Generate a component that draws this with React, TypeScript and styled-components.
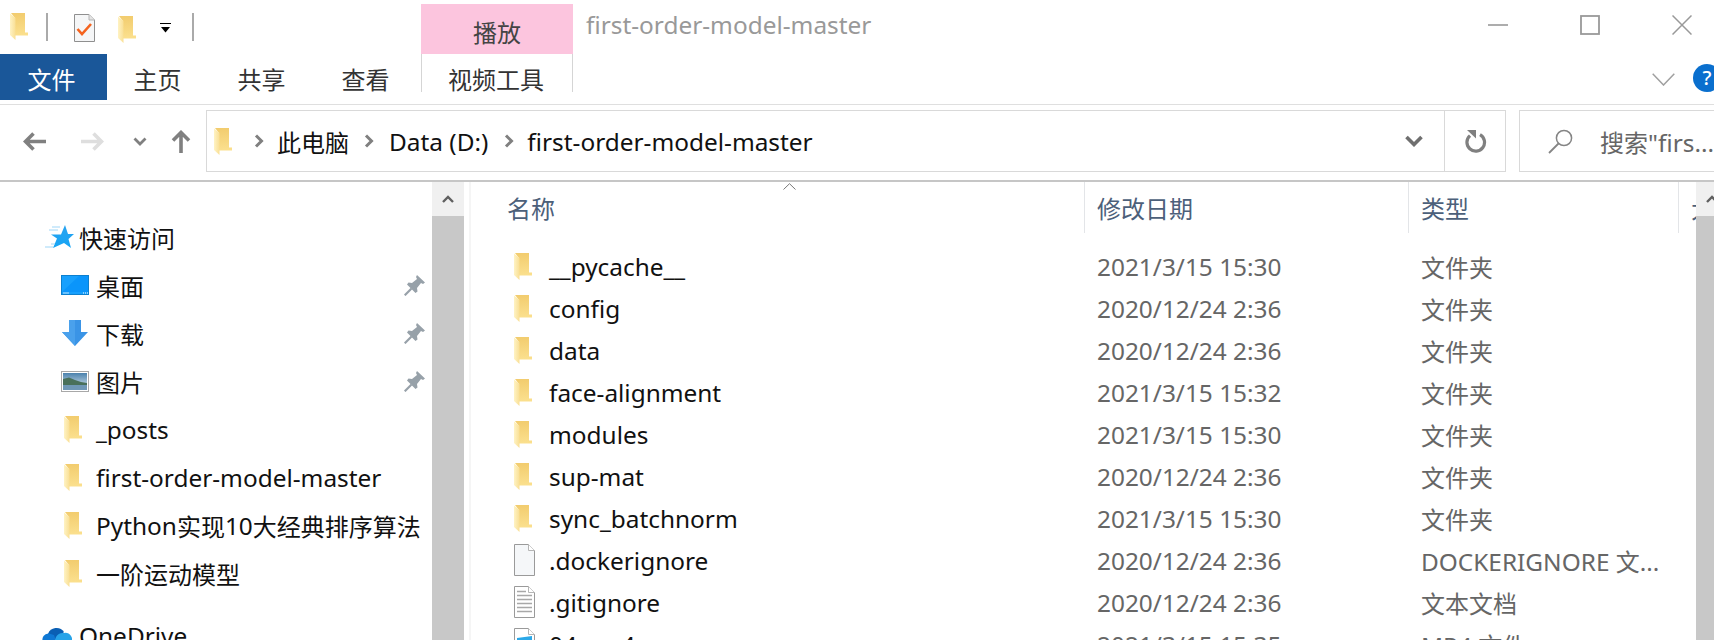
import React from 'react';
import styled, { createGlobalStyle } from 'styled-components';

const Global = createGlobalStyle`
  html, body { margin: 0; padding: 0; background: #fff; }
  body { font-family: "Noto Sans", "Noto Sans CJK SC", sans-serif; font-size: 24px; color: #000; }
`;

const Page = styled.div`
  width: 1714px;
  height: 640px;
  overflow: hidden;
  background: #fff;
  display: flex;
  flex-direction: column;
`;

const Latin = styled.span`
  font-size: 24.4px;
`;

/* title bar */
const TitleBar = styled.div`
  height: 54px;
  display: flex;
  flex-shrink: 0;
`;
const Qat = styled.div`
  width: 421px;
  flex-shrink: 0;
  display: flex;
  align-items: flex-start;
`;
const QatItem = styled.span<{ $left: number; $top: number }>`
  display: flex;
  margin-left: ${p => p.$left}px;
  margin-top: ${p => p.$top}px;
`;
const QatSep = styled.span<{ $left: number }>`
  width: 2px;
  height: 28px;
  margin-top: 13px;
  margin-left: ${p => p.$left}px;
  background: #aaa;
`;
const ContextTab = styled.div`
  width: 152px;
  height: 50px;
  margin-top: 4px;
  flex-shrink: 0;
  background: #fcc5de;
  color: #444;
  display: flex;
  align-items: center;
  justify-content: center;
  padding-top: 5px;
  box-sizing: border-box;
`;
const WinTitle = styled.div`
  flex: 1;
  padding-left: 13px;
  color: #999;
  line-height: 50px;
  white-space: nowrap;
`;
const WinButtons = styled.div`
  width: 262px;
  flex-shrink: 0;
  display: flex;
`;
const WinButton = styled.span`
  width: 92px;
  flex-shrink: 0;
  display: flex;
  justify-content: center;
  padding-top: 15px;
  box-sizing: border-box;
  height: 54px;
`;

/* ribbon */
const Ribbon = styled.div`
  height: 50px;
  display: flex;
  flex-shrink: 0;
  border-bottom: 1px solid #dfdfdf;
`;
const FileTab = styled.div`
  width: 107px;
  height: 46px;
  background: #1a5799;
  color: #fff;
  display: flex;
  align-items: center;
  justify-content: center;
  padding: 3px 4px 0 0;
  box-sizing: border-box;
`;
const Tab = styled.div`
  width: 104px;
  height: 46px;
  color: #333;
  display: flex;
  align-items: center;
  justify-content: center;
  padding: 3px 3px 0 0;
  box-sizing: border-box;
`;
const ContextRibbonTab = styled.div`
  width: 152px;
  height: 38px;
  margin-left: 2px;
  box-sizing: border-box;
  border-left: 1px solid #d5d5d5;
  border-right: 1px solid #d5d5d5;
  display: flex;
  align-items: center;
  justify-content: center;
  color: #333;
  padding: 10px 2px 0 0;
`;
const RibbonEnd = styled.div`
  margin-left: auto;
  display: flex;
  align-items: flex-start;
  padding-top: 10px;
  width: 62px;
  flex-shrink: 0;
  overflow: hidden;
`;
const Help = styled.span`
  width: 28px;
  height: 28px;
  flex-shrink: 0;
  margin-left: 18px;
  border-radius: 50%;
  background: #0a6fce;
  color: #fff;
  font-size: 20px;
  line-height: 28px;
  text-align: center;
  font-weight: 500;
`;

/* toolbar */
const Toolbar = styled.div`
  height: 77px;
  flex-shrink: 0;
  box-sizing: border-box;
  border-bottom: 2px solid #c6c6c6;
  padding-top: 5px;
  display: flex;
  align-items: flex-start;
`;
const NavIcon = styled.span<{ $left: number }>`
  display: flex;
  height: 62px;
  align-items: center;
  margin-left: ${p => p.$left}px;
`;
const AddressBox = styled.div`
  width: 1300px;
  height: 62px;
  margin-left: 15px;
  box-sizing: border-box;
  border: 1px solid #d9d9d9;
  display: flex;
  align-items: center;
  flex-shrink: 0;
`;
const Crumbs = styled.div`
  flex: 1;
  display: flex;
  align-items: center;
  color: #111;
  white-space: nowrap;
`;
const Crumb = styled.span<{ $left: number }>`
  margin-left: ${p => p.$left}px;
  display: flex;
  align-items: center;
`;
const AddrDrop = styled.span`
  width: 39px;
  display: flex;
  justify-content: flex-start;
`;
const Refresh = styled.span`
  width: 61px;
  height: 100%;
  border-left: 1px solid #d9d9d9;
  display: flex;
  align-items: center;
  justify-content: center;
  padding-left: 2px;
  box-sizing: border-box;
`;
const SearchBox = styled.div`
  width: 220px;
  height: 62px;
  margin-left: 13px;
  flex-shrink: 0;
  box-sizing: border-box;
  border: 1px solid #d9d9d9;
  border-right: 0;
  display: flex;
  align-items: center;
  padding-left: 28px;
  color: #666;
  white-space: nowrap;
`;
const SearchText = styled.span`
  margin-left: 27px;
`;

/* main */
const Main = styled.div`
  flex: 1;
  min-height: 0;
  display: flex;
  overflow: hidden;
`;
const Nav = styled.div`
  width: 432px;
  flex-shrink: 0;
  padding-top: 31px;
  box-sizing: border-box;
`;
const NavRow = styled.div<{ $indent: number; $top?: number }>`
  height: 48px;
  display: flex;
  align-items: center;
  padding-left: ${p => p.$indent}px;
  margin-top: ${p => p.$top || 0}px;
  white-space: nowrap;
  color: #111;
`;
const NavIconSlot = styled.span<{ $w: number }>`
  width: ${p => p.$w}px;
  flex-shrink: 0;
  display: flex;
  align-items: center;
`;
const PinSlot = styled.span`
  margin-left: auto;
  padding-right: 7px;
  display: flex;
`;
const Scrollbar = styled.div<{ $w: number }>`
  width: ${p => p.$w}px;
  flex-shrink: 0;
  background: #c8c8c8;
  overflow: hidden;
`;
const ScrollUp = styled.div`
  width: 32px;
  height: 34px;
  background: #f0f0f0;
  display: flex;
  align-items: center;
  justify-content: center;
`;
const NavGap = styled.div`
  width: 5px;
  flex-shrink: 0;
`;
const Files = styled.div`
  flex: 1;
  min-width: 0;
  border-left: 2px solid #f5f5f5;
  position: relative;
`;
const SortArrow = styled.span`
  position: absolute;
  left: 312px;
  top: 1px;
  display: flex;
`;
const COLS = '613px 324px 270px 18px';
const HeaderRow = styled.div`
  display: grid;
  grid-template-columns: ${COLS};
  height: 51px;
  margin-bottom: 12px;
`;
const HeaderCell = styled.div<{ $pad: number; $sep?: boolean }>`
  padding-left: ${p => p.$pad}px;
  border-left: ${p => (p.$sep ? '1px solid #e3e5e8' : '0')};
  color: #4c607a;
  line-height: 54px;
  overflow: hidden;
  white-space: nowrap;
`;
const FileRow = styled.div`
  display: grid;
  grid-template-columns: ${COLS};
  height: 42px;
  align-items: center;
  white-space: nowrap;
`;
const NameCell = styled.div`
  padding-left: 43px;
  display: flex;
  align-items: center;
  color: #111;
`;
const FileIconSlot = styled.span`
  width: 35px;
  flex-shrink: 0;
  display: flex;
`;
const MetaCell = styled.div`
  padding-left: 13px;
  color: #666;
  overflow: hidden;
`;

/* drawings */
const Folder = () => (
  <svg width="18" height="27" viewBox="0 0 18 27">
    <defs>
      <linearGradient id="fb" x1="0" y1="0" x2="0" y2="1">
        <stop offset="0" stopColor="#f2cc6e" />
        <stop offset="1" stopColor="#fbe08e" />
      </linearGradient>
      <linearGradient id="fd" x1="0" y1="0" x2="1" y2="0">
        <stop offset="0" stopColor="#fff3c4" />
        <stop offset="1" stopColor="#f9df95" />
      </linearGradient>
    </defs>
    <path d="M1 0H15V19.5H18V22.5H5V5Z" fill="url(#fb)" />
    <path d="M0 0.5L5.5 5V27L0 22Z" fill="url(#fd)" />
  </svg>
);
const PlainFile = () => (
  <svg width="21" height="32" viewBox="0 0 21 32">
    <path d="M.5.5H14.5L20.5 6.5V31.5H.5Z" fill="#f5f7f9" stroke="#9a9a9a" />
    <path d="M14.5.5V6.5H20.5" fill="#fff" stroke="#b5b5b5" />
  </svg>
);
const TextFile = () => (
  <svg width="21" height="32" viewBox="0 0 21 32">
    <path d="M.5.5H14.5L20.5 6.5V31.5H.5Z" fill="#fff" stroke="#9a9a9a" />
    <path d="M14.5.5V6.5H20.5" fill="#fff" stroke="#b5b5b5" />
    <path d="M3 5.5H12M3 9.5H18M3 13.5H18M3 17.5H18M3 21.5H18M3 25.5H18" stroke="#a8a8a8" strokeWidth="1.4" />
  </svg>
);
const VideoFile = () => (
  <svg width="21" height="32" viewBox="0 0 21 32">
    <path d="M.5.5H14.5L20.5 6.5V31.5H.5Z" fill="#fff" stroke="#9a9a9a" />
    <path d="M14.5.5V6.5H20.5" fill="#fff" stroke="#b5b5b5" />
    <path d="M3 10L18 8V22H3Z" fill="#2ba8e8" />
  </svg>
);
const CheckDoc = () => (
  <svg width="21" height="28" viewBox="0 0 21 28">
    <path d="M.5.5H15L20.5 6V27.5H.5Z" fill="#f5f6f7" stroke="#8f8f8f" />
    <path d="M15 .5V6H20.5" fill="#e4e4e4" stroke="#b5b5b5" />
    <path d="M3.5 15L8 20L17 10" fill="none" stroke="#f4631e" strokeWidth="2.6" />
  </svg>
);
const QatDrop = () => (
  <svg width="11" height="10" viewBox="0 0 11 10">
    <path d="M0 .5H11" stroke="#000" />
    <path d="M1 4H10L5.5 9.5Z" fill="#000" />
  </svg>
);
const MinIcon = () => (
  <svg width="20" height="20" viewBox="0 0 20 20"><path d="M0 10H20" stroke="#999" strokeWidth="1.6" /></svg>
);
const MaxIcon = () => (
  <svg width="20" height="20" viewBox="0 0 20 20"><rect x="1" y="1" width="18" height="18" fill="none" stroke="#999" strokeWidth="1.8" /></svg>
);
const CloseIcon = () => (
  <svg width="20" height="20" viewBox="0 0 20 20"><path d="M.5.5L19.5 19.5M19.5.5L.5 19.5" stroke="#999" strokeWidth="1.5" /></svg>
);
const RibbonChevron = () => (
  <svg width="23" height="13" viewBox="0 0 23 13" style={{ marginTop: 9, flexShrink: 0 }}>
    <path d="M.7.7L11.5 12L22.3.7" fill="none" stroke="#a0a0a0" strokeWidth="1.5" />
  </svg>
);
const ArrowH = ({ color, flip }: { color: string; flip?: boolean }) => (
  <svg width="23" height="19" viewBox="0 0 23 19" style={flip ? { transform: 'scaleX(-1)' } : undefined}>
    <path d="M23 9.5H3M10.5 1.5L2.5 9.5L10.5 17.5" fill="none" stroke={color} strokeWidth="3.6" />
  </svg>
);
const ArrowUp = () => (
  <svg width="20" height="23" viewBox="0 0 20 23">
    <path d="M10 23V3M2 10.5L10 2.5L18 10.5" fill="none" stroke="#808080" strokeWidth="3.6" />
  </svg>
);
const SmallDown = () => (
  <svg width="14" height="9" viewBox="0 0 14 9">
    <path d="M1.5 1.5L7 7L12.5 1.5" fill="none" stroke="#808080" strokeWidth="2.8" />
  </svg>
);
const CrumbSep = () => (
  <svg width="10" height="14" viewBox="0 0 10 14">
    <path d="M2 1.5L7.5 7L2 12.5" fill="none" stroke="#808080" strokeWidth="3" />
  </svg>
);
const DropDown = () => (
  <svg width="18" height="12" viewBox="0 0 18 12">
    <path d="M1.5 2L9 9.5L16.5 2" fill="none" stroke="#6f6f6f" strokeWidth="3.6" />
  </svg>
);
const RefreshIcon = () => (
  <svg width="22" height="24" viewBox="0 0 22 24">
    <path d="M5 6.6A8.8 8.8 0 1 0 15 5.6" fill="none" stroke="#808080" strokeWidth="3.2" />
    <path d="M2 1H11V9.5Z" fill="#808080" />
  </svg>
);
const SearchIcon = () => (
  <svg width="25" height="25" viewBox="0 0 25 25">
    <circle cx="16" cy="9" r="7.6" fill="none" stroke="#858585" strokeWidth="1.5" />
    <path d="M10.5 14.5L1 24" stroke="#858585" strokeWidth="1.8" />
  </svg>
);
const Star = () => (
  <svg width="29" height="24" viewBox="0 0 29 24">
    <defs>
      <linearGradient id="st" x1="0" y1="0" x2="0" y2="1">
        <stop offset="0" stopColor="#29a3f0" />
        <stop offset="1" stopColor="#16a5f5" />
      </linearGradient>
    </defs>
    <path d="M20 0L23 9H29L23.5 14L26 23L19 18L8 23L12 13.5L6 9.5H16Z" fill="url(#st)" />
    <path d="M7 2H15M4 5H13M6 19H10M0 22H8" stroke="#9fd6f7" strokeWidth="1" />
  </svg>
);
const Desktop = () => (
  <svg width="28" height="20" viewBox="0 0 28 20">
    <rect x=".5" y=".5" width="27" height="19" fill="#17a0fd" stroke="#0c80cf" />
    <path d="M1 17L18 1H27V17Z" fill="#0a95fb" />
    <path d="M2 18H8" stroke="#b9e3ff" />
    <path d="M22 18H27" stroke="#fff" strokeDasharray="1 1" />
  </svg>
);
const Download = () => (
  <svg width="26" height="26" viewBox="0 0 26 26">
    <path d="M7 0H19V12H26L13 26L0 12H7Z" fill="#3a94e6" />
    <path d="M7 0H13V26L0 12H7Z" fill="#4aa1ec" />
  </svg>
);
const Picture = () => (
  <svg width="28" height="21" viewBox="0 0 28 21">
    <defs>
      <linearGradient id="sk" x1="0" y1="0" x2="0" y2="1">
        <stop offset="0" stopColor="#4b82ad" />
        <stop offset="1" stopColor="#e8f1f5" />
      </linearGradient>
    </defs>
    <rect x=".5" y=".5" width="27" height="20" fill="#fff" stroke="#a8a8a8" />
    <rect x="2" y="2" width="24" height="17" fill="url(#sk)" />
    <path d="M2 8L8 6.5L14 9L20 11L26 12V14H2Z" fill="#49705a" />
    <rect x="2" y="14" width="24" height="5" fill="#6f97b5" />
  </svg>
);
const Pin = () => (
  <svg width="21" height="21" viewBox="0 0 21 21">
    <path d="M13 0L21 7.5L19 9L17 8L13 13L13.5 16.5L11.5 18L3 9.5L4.5 7.5L8 8L13 4L12 2Z" fill="#97a1a9" />
    <path d="M7.5 13.5L.7 20.3" stroke="#97a1a9" strokeWidth="2.2" />
  </svg>
);
const OneDriveIcon = () => (
  <svg width="32" height="22" viewBox="0 0 32 22">
    <path d="M8 10A9 9 0 0 1 24 8L16 16Z" fill="#0a5fb4" />
    <path d="M3 18A6 6 0 0 1 9 9.5L14 11L18 22H6Z" fill="#0f78d4" />
    <path d="M13 22L16 13A8 8 0 0 1 24 9A6.5 6.5 0 0 1 32 16V22Z" fill="#27a3e8" />
  </svg>
);
const ChevronUp = () => (
  <svg width="12" height="8" viewBox="0 0 12 8">
    <path d="M1 7L6 2L11 7" fill="none" stroke="#606060" strokeWidth="2.4" />
  </svg>
);
const SortUp = () => (
  <svg width="13" height="7" viewBox="0 0 13 7">
    <path d="M.5 6.5L6.5.7L12.5 6.5" fill="none" stroke="#777" />
  </svg>
);

type Kind = 'folder' | 'plain' | 'text' | 'video';
const FILE_ICONS: Record<Kind, () => React.ReactElement> = {
  folder: Folder,
  plain: PlainFile,
  text: TextFile,
  video: VideoFile,
};
const files: { name: string; date: string; type: React.ReactNode; kind: Kind }[] = [
  { name: '__pycache__', date: '2021/3/15 15:30', type: '文件夹', kind: 'folder' },
  { name: 'config', date: '2020/12/24 2:36', type: '文件夹', kind: 'folder' },
  { name: 'data', date: '2020/12/24 2:36', type: '文件夹', kind: 'folder' },
  { name: 'face-alignment', date: '2021/3/15 15:32', type: '文件夹', kind: 'folder' },
  { name: 'modules', date: '2021/3/15 15:30', type: '文件夹', kind: 'folder' },
  { name: 'sup-mat', date: '2020/12/24 2:36', type: '文件夹', kind: 'folder' },
  { name: 'sync_batchnorm', date: '2021/3/15 15:30', type: '文件夹', kind: 'folder' },
  { name: '.dockerignore', date: '2020/12/24 2:36', type: <><Latin>DOCKERIGNORE </Latin>文<Latin>...</Latin></>, kind: 'plain' },
  { name: '.gitignore', date: '2020/12/24 2:36', type: '文本文档', kind: 'text' },
  { name: '04.mp4', date: '2021/3/15 15:35', type: <><Latin>MP4 </Latin>文件</>, kind: 'video' },
];

const quick: { label: React.ReactNode; icon: React.ReactElement; pinned?: boolean; indent: number; w: number }[] = [
  { label: '桌面', icon: <Desktop />, pinned: true, indent: 61, w: 35 },
  { label: '下载', icon: <Download />, pinned: true, indent: 62, w: 34 },
  { label: '图片', icon: <Picture />, pinned: true, indent: 61, w: 35 },
  { label: <Latin>_posts</Latin>, icon: <Folder />, indent: 64, w: 32 },
  { label: <Latin>first-order-model-master</Latin>, icon: <Folder />, indent: 64, w: 32 },
  { label: <><Latin>Python</Latin>实现<Latin>10</Latin>大经典排序算法</>, icon: <Folder />, indent: 64, w: 32 },
  { label: '一阶运动模型', icon: <Folder />, indent: 64, w: 32 },
];

export default function App() {
  return (
    <Page>
      <Global />
      <TitleBar>
        <Qat>
          <QatItem $left={10} $top={13}><Folder /></QatItem>
          <QatSep $left={18} />
          <QatItem $left={26} $top={14}><CheckDoc /></QatItem>
          <QatItem $left={23} $top={16}><Folder /></QatItem>
          <QatItem $left={24} $top={23}><QatDrop /></QatItem>
          <QatSep $left={21} />
        </Qat>
        <ContextTab>播放</ContextTab>
        <WinTitle><Latin>first-order-model-master</Latin></WinTitle>
        <WinButtons>
          <WinButton><MinIcon /></WinButton>
          <WinButton><MaxIcon /></WinButton>
          <WinButton><CloseIcon /></WinButton>
        </WinButtons>
      </TitleBar>
      <Ribbon>
        <FileTab>文件</FileTab>
        <Tab>主页</Tab>
        <Tab>共享</Tab>
        <Tab>查看</Tab>
        <ContextRibbonTab>视频工具</ContextRibbonTab>
        <RibbonEnd>
          <RibbonChevron />
          <Help>?</Help>
        </RibbonEnd>
      </Ribbon>
      <Toolbar>
        <NavIcon $left={23}><ArrowH color="#808080" /></NavIcon>
        <NavIcon $left={35}><ArrowH color="#dedede" flip /></NavIcon>
        <NavIcon $left={29}><SmallDown /></NavIcon>
        <NavIcon $left={24}><ArrowUp /></NavIcon>
        <AddressBox>
          <Crumbs>
            <Crumb $left={7}><Folder /></Crumb>
            <Crumb $left={22}><CrumbSep /></Crumb>
            <Crumb $left={13}>此电脑</Crumb>
            <Crumb $left={15}><CrumbSep /></Crumb>
            <Crumb $left={15}><Latin>Data (D:)</Latin></Crumb>
            <Crumb $left={16}><CrumbSep /></Crumb>
            <Crumb $left={13}><Latin>first-order-model-master</Latin></Crumb>
          </Crumbs>
          <AddrDrop><DropDown /></AddrDrop>
          <Refresh><RefreshIcon /></Refresh>
        </AddressBox>
        <SearchBox>
          <SearchIcon />
          <SearchText>搜索<Latin>"firs...</Latin></SearchText>
        </SearchBox>
      </Toolbar>
      <Main>
        <Nav>
          <NavRow $indent={45}>
            <NavIconSlot $w={34}><Star /></NavIconSlot>快速访问
          </NavRow>
          {quick.map((q, i) => (
            <NavRow key={i} $indent={q.indent}>
              <NavIconSlot $w={q.w}>{q.icon}</NavIconSlot>
              {q.label}
              {q.pinned && <PinSlot><Pin /></PinSlot>}
            </NavRow>
          ))}
          <NavRow $indent={40} $top={14}>
            <NavIconSlot $w={39}><OneDriveIcon /></NavIconSlot>
            <Latin>OneDrive</Latin>
          </NavRow>
        </Nav>
        <Scrollbar $w={32}>
          <ScrollUp><ChevronUp /></ScrollUp>
        </Scrollbar>
        <NavGap />
        <Files>
          <SortArrow><SortUp /></SortArrow>
          <HeaderRow>
            <HeaderCell $pad={36}>名称</HeaderCell>
            <HeaderCell $pad={12} $sep>修改日期</HeaderCell>
            <HeaderCell $pad={12} $sep>类型</HeaderCell>
            <HeaderCell $pad={12} $sep>大小</HeaderCell>
          </HeaderRow>
          {files.map(f => {
            const Icon = FILE_ICONS[f.kind];
            return (
              <FileRow key={f.name}>
                <NameCell>
                  <FileIconSlot><Icon /></FileIconSlot>
                  <Latin>{f.name}</Latin>
                </NameCell>
                <MetaCell><Latin>{f.date}</Latin></MetaCell>
                <MetaCell>{f.type}</MetaCell>
                <span />
              </FileRow>
            );
          })}
        </Files>
        <Scrollbar $w={18}>
          <ScrollUp><ChevronUp /></ScrollUp>
        </Scrollbar>
      </Main>
    </Page>
  );
}
